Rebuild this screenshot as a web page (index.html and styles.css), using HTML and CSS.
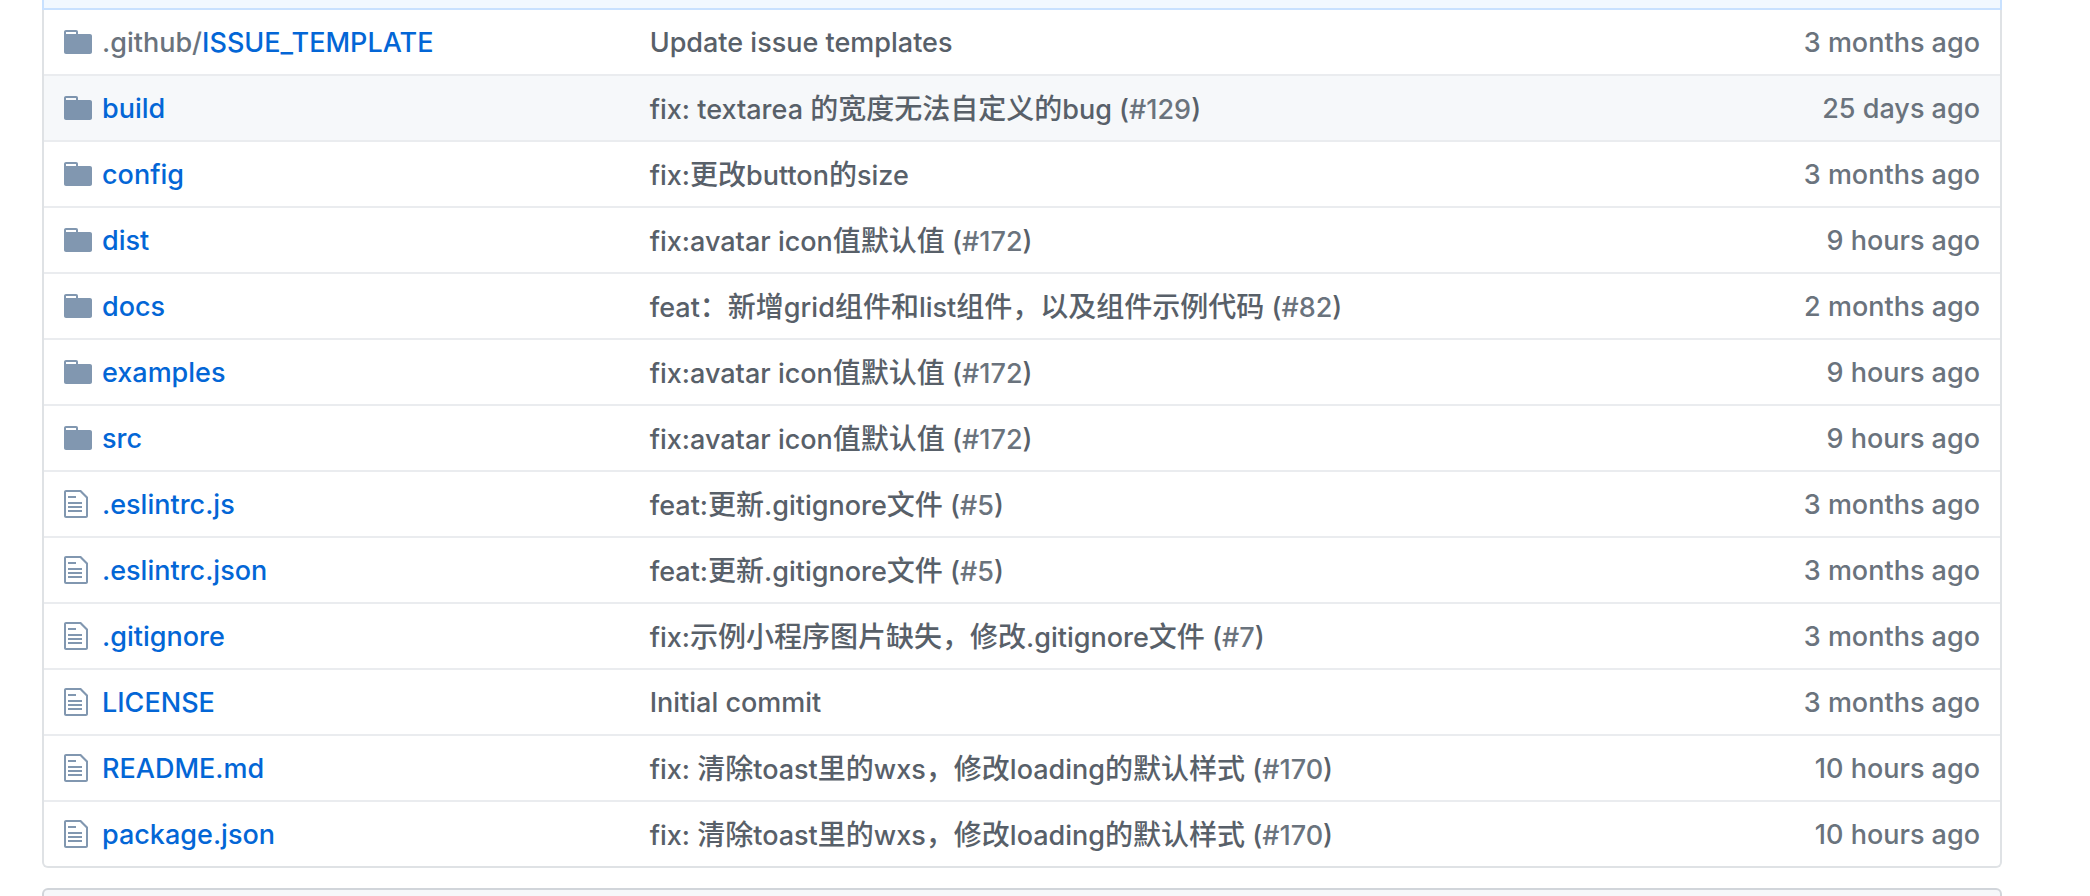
FILE: index.html
```html
<!DOCTYPE html>
<html lang="en">
<head>
<meta charset="utf-8">
<meta name="viewport" content="width=device-width, initial-scale=1">
<title>Repository files</title>
<link rel="stylesheet" href="styles.css">
</head>
<body>
<svg class="sprite" aria-hidden="true">
  <symbol id="dir" viewBox="0 0 14 16"><path fill-rule="evenodd" d="M13 4H7V3c0-.66-.31-1-1-1H1c-.55 0-1 .45-1 1v10c0 .55.45 1 1 1h12c.55 0 1-.45 1-1V5c0-.55-.45-1-1-1zM6 4H1V3h5v1z"/></symbol>
  <symbol id="file" viewBox="0 0 12 16"><path fill-rule="evenodd" d="M6 5H2V4h4v1zM2 8h7V7H2v1zm0 2h7V9H2v1zm0 2h7v-1H2v1zm10-7.5V14c0 .55-.45 1-1 1H1c-.55 0-1-.45-1-1V2c0-.55.45-1 1-1h7.5L12 4.5zM11 5L8 2H1v12h10V5z"/></symbol>
</svg>
<main class="page">
  <div class="commit-bar"></div>
  <div class="files-wrap">
    <table class="files">
      <tbody>
        <tr><td class="icon"><svg class="dir"><use href="#dir"/></svg></td><td class="name"><a href="#"><span class="parent">.github/</span>ISSUE_TEMPLATE</a></td><td class="message"><a href="#">Update issue templates</a></td><td class="age">3 months ago</td></tr>
        <tr class="active"><td class="icon"><svg class="dir"><use href="#dir"/></svg></td><td class="name"><a href="#">build</a></td><td class="message"><a href="#">fix: textarea <span lang="zh-CN">的宽度无法自定义的</span>bug (</a><a class="issue" href="#">#129</a><a href="#">)</a></td><td class="age">25 days ago</td></tr>
        <tr><td class="icon"><svg class="dir"><use href="#dir"/></svg></td><td class="name"><a href="#">config</a></td><td class="message"><a href="#">fix:<span lang="zh-CN">更改</span>button<span lang="zh-CN">的</span>size</a></td><td class="age">3 months ago</td></tr>
        <tr><td class="icon"><svg class="dir"><use href="#dir"/></svg></td><td class="name"><a href="#">dist</a></td><td class="message"><a href="#">fix:avatar icon<span lang="zh-CN">值默认值</span> (</a><a class="issue" href="#">#172</a><a href="#">)</a></td><td class="age">9 hours ago</td></tr>
        <tr><td class="icon"><svg class="dir"><use href="#dir"/></svg></td><td class="name"><a href="#">docs</a></td><td class="message"><a href="#">feat<span lang="zh-CN">：新增</span>grid<span lang="zh-CN">组件和</span>list<span lang="zh-CN">组件，以及组件示例代码</span> (</a><a class="issue" href="#">#82</a><a href="#">)</a></td><td class="age">2 months ago</td></tr>
        <tr><td class="icon"><svg class="dir"><use href="#dir"/></svg></td><td class="name"><a href="#">examples</a></td><td class="message"><a href="#">fix:avatar icon<span lang="zh-CN">值默认值</span> (</a><a class="issue" href="#">#172</a><a href="#">)</a></td><td class="age">9 hours ago</td></tr>
        <tr><td class="icon"><svg class="dir"><use href="#dir"/></svg></td><td class="name"><a href="#">src</a></td><td class="message"><a href="#">fix:avatar icon<span lang="zh-CN">值默认值</span> (</a><a class="issue" href="#">#172</a><a href="#">)</a></td><td class="age">9 hours ago</td></tr>
        <tr><td class="icon"><svg class="file"><use href="#file"/></svg></td><td class="name"><a href="#">.eslintrc.js</a></td><td class="message"><a href="#">feat:<span lang="zh-CN">更新</span>.gitignore<span lang="zh-CN">文件</span> (</a><a class="issue" href="#">#5</a><a href="#">)</a></td><td class="age">3 months ago</td></tr>
        <tr><td class="icon"><svg class="file"><use href="#file"/></svg></td><td class="name"><a href="#">.eslintrc.json</a></td><td class="message"><a href="#">feat:<span lang="zh-CN">更新</span>.gitignore<span lang="zh-CN">文件</span> (</a><a class="issue" href="#">#5</a><a href="#">)</a></td><td class="age">3 months ago</td></tr>
        <tr><td class="icon"><svg class="file"><use href="#file"/></svg></td><td class="name"><a href="#">.gitignore</a></td><td class="message"><a href="#">fix:<span lang="zh-CN">示例小程序图片缺失，修改</span>.gitignore<span lang="zh-CN">文件</span> (</a><a class="issue" href="#">#7</a><a href="#">)</a></td><td class="age">3 months ago</td></tr>
        <tr><td class="icon"><svg class="file"><use href="#file"/></svg></td><td class="name"><a href="#">LICENSE</a></td><td class="message"><a href="#">Initial commit</a></td><td class="age">3 months ago</td></tr>
        <tr><td class="icon"><svg class="file"><use href="#file"/></svg></td><td class="name"><a href="#">README.md</a></td><td class="message"><a href="#">fix: <span lang="zh-CN">清除</span>toast<span lang="zh-CN">里的</span>wxs<span lang="zh-CN">，修改</span>loading<span lang="zh-CN">的默认样式</span> (</a><a class="issue" href="#">#170</a><a href="#">)</a></td><td class="age">10 hours ago</td></tr>
        <tr><td class="icon"><svg class="file"><use href="#file"/></svg></td><td class="name"><a href="#">package.json</a></td><td class="message"><a href="#">fix: <span lang="zh-CN">清除</span>toast<span lang="zh-CN">里的</span>wxs<span lang="zh-CN">，修改</span>loading<span lang="zh-CN">的默认样式</span> (</a><a class="issue" href="#">#170</a><a href="#">)</a></td><td class="age">10 hours ago</td></tr>
      </tbody>
    </table>
  </div>
  <section class="readme"></section>
</main>
</body>
</html>
```
FILE: styles.css
```css
* { box-sizing: border-box; }

body {
  margin: 0;
  background: #fff;
  color: #24292e;
  font: 450 27px/40px Inter, "Noto Sans CJK SC", sans-serif;
  overflow: hidden;
}

a { color: inherit; text-decoration: none; }

[lang="zh-CN"] { font-size: 28px; }

.sprite { display: none; }

.page {
  height: 100vh;
  padding: 0 88px 0 42px;
  overflow: hidden;
}

.commit-bar {
  height: 10px;
  background: #f1f8ff;
  border: 2px solid #c8e1ff;
  border-top: 0;
}

.files-wrap {
  border: 2px solid #dfe2e5;
  border-top: 0;
  border-radius: 0 0 6px 6px;
}

.files {
  width: 100%;
  table-layout: fixed;
  border-collapse: separate;
  border-spacing: 0;
}

.files td {
  height: 66px;
  padding: 2px 0 0;
  border-top: 2px solid #eaecef;
  vertical-align: middle;
  white-space: nowrap;
}

.files tr:first-child td { height: 64px; border-top: 0; }

.files .active { background: #f6f8fa; }

.files .icon { width: 58px; padding: 0 0 0 20px; }

.icon svg {
  display: block;
  height: 32px;
  fill: rgba(3, 47, 98, 0.5);
}

.dir { width: 28px; }
.file { width: 24px; }

.name { width: 28%; color: #0366d6; }
.parent { color: #6a737d; }

.message { color: #586069; }
.issue { color: #6a737d; }

.files .age {
  width: 240px;
  padding-right: 20px;
  color: #6a737d;
  text-align: right;
}

.readme {
  height: 80px;
  margin-top: 20px;
  background: #f6f8fa;
  border: 2px solid #d1d5da;
  border-radius: 6px 6px 0 0;
}
```
